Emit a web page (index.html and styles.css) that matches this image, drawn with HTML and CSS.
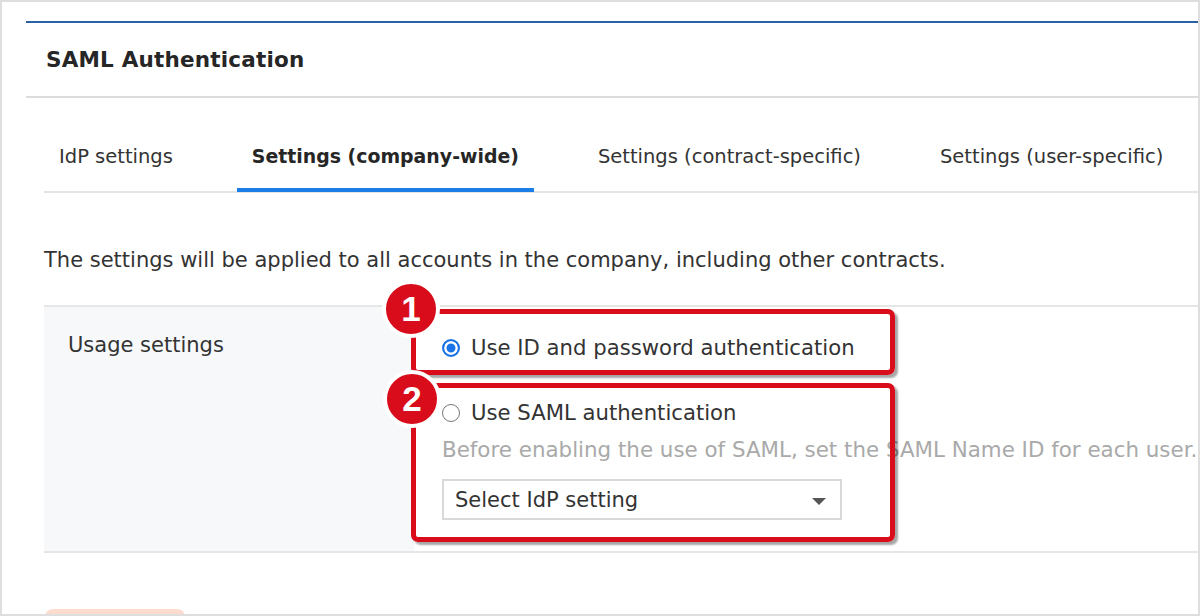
FILE: index.html
```html
<!DOCTYPE html>
<html>
<head>
<meta charset="utf-8">
<link rel="stylesheet" href="styles.css">
</head>
<body>
<div class="frame">
  <div class="panel">
    <div class="header"><h1 class="title">SAML Authentication</h1></div>
    <div class="content">
      <div class="tabs">
        <div class="tab">IdP settings</div>
        <div class="tab active">Settings (company-wide)</div>
        <div class="tab">Settings (contract-specific)</div>
        <div class="tab">Settings (user-specific)</div>
      </div>
      <p class="desc">The settings will be applied to all accounts in the company, including other contracts.</p>
      <div class="row">
        <div class="label">Usage settings</div>
        <div class="field">
          <div class="option first"><span class="radio on"></span><span>Use ID and password authentication</span></div>
          <div class="option second"><span class="radio"></span><span>Use SAML authentication</span></div>
          <div class="hint">Before enabling the use of SAML, set the SAML Name ID for each user.</div>
          <div class="select"><span>Select IdP setting</span><span class="caret"></span></div>
        </div>
        <div class="mark box1"></div>
        <div class="mark box2"></div>
        <div class="badge b1">1</div>
        <div class="badge b2">2</div>
      </div>
      <div class="save"></div>
    </div>
  </div>
</div>
</body>
</html>
```
FILE: styles.css
```css
html, body {
  margin: 0;
  padding: 0;
  background: #fff;
}
body {
  font-family: "DejaVu Sans", "Noto Sans", sans-serif;
  color: #333;
}
.frame {
  width: 1200px;
  height: 616px;
  box-sizing: border-box;
  border: 2px solid #dedede;
  overflow: hidden;
  padding: 19px 0 0 24px;
}
.panel {
  border-top: 2px solid #2a62a6;
}
.header {
  height: 73px;
  border-bottom: 2px solid #dcdcdc;
  display: flex;
  align-items: center;
  padding-left: 20px;
}
.title {
  margin: 0;
  font-size: 21.5px;
  font-weight: bold;
  color: #262626;
  letter-spacing: 0.2px;
}
.content {
  padding-left: 18px;
}
.tabs {
  display: flex;
  gap: 49px;
  margin-top: 24px;
  border-bottom: 2px solid #e4e4e4;
  height: 69px;
}
.tab {
  padding: 0 15px;
  font-size: 19.5px;
  line-height: 69px;
  color: #333;
  position: relative;
  white-space: nowrap;
}
.tab.active {
  font-weight: bold;
  font-size: 18.9px;
  color: #262626;
}
.tab.active::after {
  content: "";
  position: absolute;
  left: 0;
  right: 0;
  bottom: -1px;
  height: 4px;
  background: #1a7ee6;
}
.desc {
  margin: 52px 0 0 0;
  font-size: 21px;
  line-height: 30px;
  color: #333;
  white-space: nowrap;
}
.row {
  position: relative;
  margin-top: 30px;
  display: flex;
  border-top: 2px solid #e6e6e6;
  border-bottom: 2px solid #e6e6e6;
  height: 248px;
  box-sizing: border-box;
}
.label {
  width: 370px;
  background: #f7f8fa;
  padding: 23px 0 0 24px;
  box-sizing: border-box;
  font-size: 21px;
  line-height: 30px;
}
.field {
  padding: 26px 0 0 28px;
  font-size: 21.2px;
}
.option {
  display: flex;
  align-items: center;
  gap: 11px;
  height: 30px;
  line-height: 30px;
  white-space: nowrap;
}
.option.second {
  margin-top: 35px;
}
.radio {
  width: 16px;
  height: 16px;
  border-radius: 50%;
  border: 1.5px solid #777;
  box-sizing: content-box;
  background: #fff;
  flex: none;
}
.radio.on {
  border: 2px solid #1a74e8;
  width: 14px;
  height: 14px;
  background: #1a74e8;
  box-shadow: inset 0 0 0 2.5px #fff;
}
.hint {
  margin-top: 7px;
  color: #a9a9a9;
  font-size: 21.4px;
  line-height: 30px;
  white-space: nowrap;
}
.select {
  margin-top: 14px;
  width: 400px;
  height: 41px;
  box-sizing: border-box;
  border: 2px solid #d9d9d9;
  display: flex;
  align-items: center;
  justify-content: space-between;
  padding: 0 14px 0 11px;
  color: #333;
  font-size: 21px;
}
.caret {
  width: 0;
  height: 0;
  border-left: 7px solid transparent;
  border-right: 7px solid transparent;
  border-top: 7px solid #555;
  margin-top: 3px;
}
.mark {
  position: absolute;
  left: 367px;
  width: 484px;
  box-sizing: border-box;
  border: 5px solid #d80c1a;
  border-radius: 7px;
  box-shadow: 3px 3px 2px rgba(0, 0, 0, 0.35);
}
.box1 {
  top: 2px;
  height: 66px;
}
.box2 {
  top: 76px;
  height: 159px;
}
.badge {
  position: absolute;
  width: 50px;
  height: 50px;
  border-radius: 50%;
  background: #d80c1a;
  border: 4px solid #fff;
  color: #fff;
  font-family: "Liberation Sans", Arial, sans-serif;
  font-weight: bold;
  font-size: 35px;
  line-height: 50px;
  text-align: center;
}
.b1 {
  left: 338px;
  top: -27px;
}
.b2 {
  left: 339px;
  top: 63px;
}
.save {
  margin-top: 56px;
  width: 140px;
  height: 20px;
  margin-left: 1px;
  background: #fddcd0;
  border-radius: 8px 8px 0 0;
}
```
